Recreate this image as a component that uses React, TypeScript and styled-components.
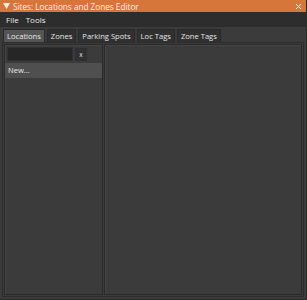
import * as React from 'react';
import styled, { createGlobalStyle } from 'styled-components';

const GlobalStyle = createGlobalStyle`
  html, body { margin: 0; padding: 0; background: #3b3b3b; }
  body { font-family: "Open Sans", "Noto Sans", sans-serif; }
`;

const Window = styled.div`
  width: 307px;
  height: 300px;
  display: flex;
  flex-direction: column;
  background: #3b3b3b;
  box-sizing: border-box;
  border-right: 1px solid #2a2a2a;
  border-bottom: 1px solid #2a2a2a;
`;

const TitleBar = styled.div`
  height: 12px;
  background: #d6763a;
  display: flex;
  align-items: center;
  padding: 0 4px 0 3px;
  color: #fbeee4;
  font-size: 8.2px;
  gap: 3px;
`;

const TitleText = styled.span`
  flex: 1;
  white-space: nowrap;
`;

const MenuBar = styled.div`
  height: 15px;
  background: #2d2d2d;
  display: flex;
  align-items: center;
  gap: 7px;
  padding: 0 6px;
  color: #ececec;
  font-size: 8px;
`;

const TabRow = styled.div`
  display: flex;
  gap: 2px;
  padding: 2px 2px 0 3px;
  height: 13px;
`;

const Tab = styled.div<{ $active?: boolean }>`
  padding: 0 3px;
  font-size: 7.6px;
  line-height: 13px;
  color: #e6e6e6;
  background: ${(p) => (p.$active ? '#555555' : '#303030')};
  border: 1px solid #2a2a2a;
  border-bottom: none;
  white-space: nowrap;
`;

const Body = styled.div`
  flex: 1;
  display: flex;
  gap: 1px;
  margin: 0 2px 2px 2px;
  padding: 1px;
  border: 1px solid #2c2c2c;
`;

const Panel = styled.div<{ $w?: number }>`
  ${(p) => (p.$w ? `width: ${p.$w}px;` : 'flex: 1;')}
  border: 1px solid #2a2a2a;
  box-shadow: inset 1px 1px 0 #444;
  display: flex;
  flex-direction: column;
`;

const SearchRow = styled.div`
  display: flex;
  align-items: center;
  gap: 2px;
  padding: 2px;
`;

const SearchInput = styled.div`
  width: 64px;
  height: 12px;
  background: #262626;
  border: 1px solid #303030;
`;

const ClearButton = styled.div`
  width: 12px;
  height: 13px;
  background: #303030;
  color: #e0e0e0;
  font-size: 6.5px;
  display: flex;
  align-items: center;
  justify-content: center;
`;

const ListItem = styled.div`
  height: 15px;
  background: #4f4f4f;
  color: #eaeaea;
  font-size: 7.6px;
  line-height: 15px;
  padding: 0 3px;
`;

const tabs = ['Locations', 'Zones', 'Parking Spots', 'Loc Tags', 'Zone Tags'];

const App: React.FC = () => {
  return (
    <>
      <GlobalStyle />
      <Window>
        <TitleBar>
          <svg width="7" height="6" viewBox="0 0 7 6">
            <path d="M0 0 L7 0 L3.5 6 Z" fill="#fbeee4" />
          </svg>
          <TitleText>Sites: Locations and Zones Editor</TitleText>
          <svg width="7" height="7" viewBox="0 0 7 7">
            <path d="M1 1 L6 6 M6 1 L1 6" stroke="#fbeee4" strokeWidth="1" />
          </svg>
        </TitleBar>
        <MenuBar>
          <span>File</span>
          <span>Tools</span>
        </MenuBar>
        <TabRow>
          {tabs.map((t, i) => (
            <Tab key={t} $active={i === 0}>{t}</Tab>
          ))}
        </TabRow>
        <Body>
          <Panel $w={97}>
            <SearchRow>
              <SearchInput />
              <ClearButton>x</ClearButton>
            </SearchRow>
            <ListItem>New...</ListItem>
          </Panel>
          <Panel />
        </Body>
      </Window>
    </>
  );
};

export default App;
